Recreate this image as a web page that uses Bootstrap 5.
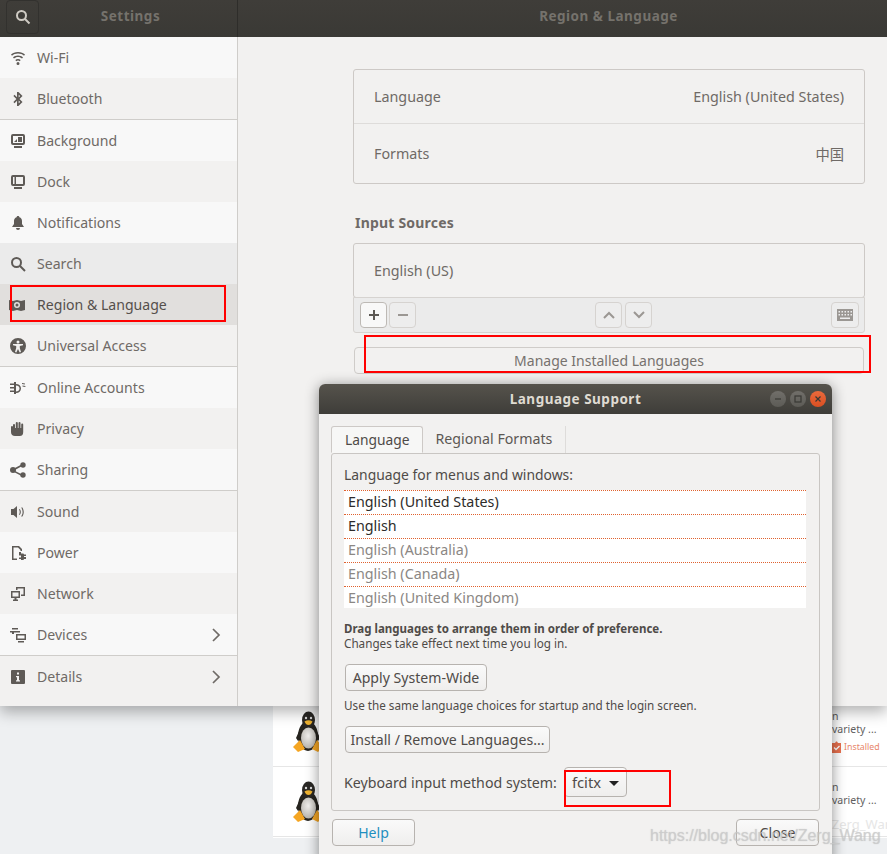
<!DOCTYPE html>
<html lang="en">
<head>
<meta charset="UTF-8">
<meta name="viewport" content="width=device-width, initial-scale=1.0">
<title>Region &amp; Language</title>
<link href="https://cdn.jsdelivr.net/npm/bootstrap@5.3.3/dist/css/bootstrap.min.css" rel="stylesheet">
<style>
html, body { height: 100%; }
body { position: relative; width: 887px; height: 854px; overflow: hidden; background: #eef0f2; font-family: "Noto Sans", "Open Sans", sans-serif; font-size: 14.3px; color: #6f6a66; }
.cjk { font-family: "Noto Sans CJK SC", sans-serif; }

/* app behind the settings window */
.back-app { position: absolute; left: 273px; top: 700px; width: 614px; height: 138px; background: #fff; overflow: hidden; }
.back-row { height: 67px; border-bottom: 1px solid #e6e6e6; padding: 11px 0 0 20px; }
.back-row + .back-row { height: 70px; padding-top: 14px; }
.back-text { position: absolute; font-size: 10.5px; color: #5f5f5f; line-height: 14px; white-space: nowrap; }
.back-installed { color: #e8866a; font-size: 8.8px; }
.back-wm { color: #e6e6e6; font-size: 13px; }

/* settings window */
.settings-win { position: absolute; left: 0; top: 0; width: 887px; height: 706px; background: #f2f1f0; box-shadow: 0 6px 14px rgba(0,0,0,.3); }
.win-header { height: 37px; background: linear-gradient(#3f3d39, #3a3935); }
.head-left { width: 238px; border-right: 1px solid #2e2d2a; }
.search-btn { width: 33px; height: 34px; margin-left: 6px; margin-top: -4px; border: 1px solid #32312e; border-radius: 4px; flex-shrink: 0; }
.head-title { font-weight: 700; font-size: 13.5px; letter-spacing: .5px; color: #75726c; padding-bottom: 4px; }
.left-title { padding-left: 13px; }
.right-title { padding-left: 92px; }
.side-panel { width: 238px; height: 669px; border-right: 1px solid #cfcdca; background: #f2f1f0; flex-shrink: 0; }
.side-list { --bs-list-group-bg: transparent; --bs-list-group-border-width: 0; border-radius: 0; }
.side-row { height: 41px; padding: 0 0 0 10px; display: flex; align-items: center; color: #6f6a66; background: #f8f8f8; font-size: 14.1px; }
.side-row.alt { background: #f2f1f0; }
.side-row.sep { height: 42px; border-bottom: 1px solid #cfcdca; }
.side-row.hover { background: #ebebeb; }
.side-row.active-row { background: #e1dfdd; color: #55504c; }
.side-ico { width: 16px; height: 16px; margin-right: 11px; flex: none; fill: #5e5a56; }
.side-arrow { margin-left: auto; margin-right: 16px; width: 10px; height: 16px; fill: none; stroke: #6f6a66; stroke-width: 1.7; }

.main-panel { padding: 32px 22px 0 115px; }
.frame-box { border: 1px solid #cdc9c6; border-radius: 3px; }
.lang-row { height: 53px; padding: 0 20px; }
.lang-row + .lang-row { height: 60px; border-top: 1px solid #dedcda; }
.input-title { font-weight: 700; font-size: 14px; letter-spacing: .2px; margin: 29px 0 11px 2px; line-height: 19px; }
.input-row { height: 55px; padding: 0 20px; }
.tool-row { height: 36px; margin-top: -1px; background: #ebebeb; border: 1px solid #d6d3d0; border-radius: 0 0 3px 3px; padding: 0 5px 0 6px; }
.tool-btn { width: 27px; height: 26px; padding: 0; border: 1px solid #d6d3d0; border-radius: 4px; background: #ededed; display: flex; align-items: center; justify-content: center; }
.tool-btn.on { background: #f8f8f8; border-color: #bdb9b5; }
.tool-btn.kbd-btn { width: 28px; }
.tool-btn svg { width: 14px; height: 14px; fill: none; stroke: #9b9793; stroke-width: 2; }
.tool-btn.on svg { stroke: #5d5955; }
.tool-gap { gap: 2px; }
.tool-gap.wide { gap: 3px; }
.manage-btn { display: block; width: 510px; height: 27px; margin: 14px 0 0 1px; padding: 0; border: 1px solid #cfccc9; border-radius: 4px; background: #f2f1f0; color: #77726e; font-size: 14px; }

/* language support dialog */
.lang-win { position: absolute; left: 319px; top: 384px; width: 513px; height: 480px; background: #f2f1f0; border-radius: 6px 6px 0 0; box-shadow: 0 2px 14px rgba(0,0,0,.45); color: #4f4b48; }
.dlg-header { height: 30px; background: linear-gradient(#56534c, #3e3d39); border-radius: 6px 6px 0 0; position: relative; }
.dlg-title { font-weight: 700; font-size: 13.5px; letter-spacing: .5px; color: #dfdbd2; }
.win-ctrls { position: absolute; right: 6px; top: 7px; gap: 4px; }
.win-dot { width: 16px; height: 16px; border-radius: 50%; background: linear-gradient(#716f6a, #5c5b56); display: flex; align-items: center; justify-content: center; }
.win-dot.close-dot { background: linear-gradient(#ec6a3c, #d94f22); }
.win-dot svg { width: 10px; height: 10px; fill: none; stroke: #3a3935; stroke-width: 1.2; }
.dlg-body { padding: 12px 12px 0; }
.dlg-tabs { --bs-nav-tabs-border-width: 1px; --bs-nav-tabs-border-color: #cdc9c6; border-bottom: 0; height: 27px; }
.dlg-tabs .nav-link { height: 27px; padding: 0 13px; line-height: 26px; font-size: 13.8px; color: #5c5854; border-radius: 3px 3px 0 0; }
.dlg-tabs .nav-link.active { background: #f7f7f6; color: #4f4b48; border-color: #cdc9c6; border-bottom-color: #f7f7f6; padding-right: 12px; }
.dlg-tabs .nav-link.plain { border: 0; border-right: 1px solid #dedcda; border-radius: 0; font-size: 14.2px; }
.tab-page { height: 358px; border: 1px solid #c9c6c3; border-radius: 3px; padding: 11px 13px 0 12px; }
.menu-label { line-height: 20px; font-size: 13.9px; margin-bottom: 5px; }
.order-list { --bs-list-group-bg: #fff; --bs-list-group-border-width: 0; border-radius: 0; background: #fff; }
.order-list .order-row { height: 24px; padding: 0 4px; line-height: 22px; border-top: 1px dotted #e0622f; font-size: 14.3px; color: #2e2c2a; background: #fff; }
.order-list .order-row.dim { color: #8b8784; }
.order-list .order-row:last-child { height: 22px; }
.hint-text { font-size: 11.7px; line-height: 15px; }
.hint-text.first { margin-top: 13px; font-size: 11.5px; }
.gtk-btn { height: 27px; padding: 0 5px; border: 1px solid #b7b3af; border-radius: 4px; background: linear-gradient(#fafafa, #efeeed); color: #4f4b48; font-size: 14.1px; line-height: 24px; white-space: nowrap; }
.apply-btn { display: block; margin: 13px 0 7px 1px; padding: 0; width: 142px; }
.install-btn { display: block; margin: 13px 0 14px 1px; padding: 0; width: 205px; }
.combo-line { gap: 7px; }
.combo-label { font-size: 14.2px; padding-top: 2px; }
.combo-btn { height: 30px; padding: 0 7px; font-size: 14.8px; }
.combo-arrow { width: 0; height: 0; margin-left: 8px; border-left: 5px solid transparent; border-right: 5px solid transparent; border-top: 5px solid #222; display: inline-block; vertical-align: 2px; }
.foot-row { margin-top: 8px; padding: 0 1px; }
.foot-btn { width: 83px; height: 27px; padding: 0; }
.help-txt { color: #1f8fc0; }

/* red marks drawn over the screenshot */
.red-mark { position: absolute; border: 2px solid #f00; pointer-events: none; }
.wm-text { position: absolute; left: 650px; top: 824px; font-family: "Liberation Sans", sans-serif; font-size: 16px; color: rgba(205,205,205,.75); text-shadow: 0 0 1px rgba(120,120,120,.35); white-space: nowrap; }
</style>
</head>
<body>

<svg width="0" height="0" class="position-absolute">
  <defs>
    <radialGradient id="bellyGrad" cx=".5" cy=".4" r=".6"><stop offset="0" stop-color="#f4f3f0"/><stop offset="1" stop-color="#b9b6b0"/></radialGradient>
    <symbol id="tux" viewBox="0 0 30 42">
      <ellipse cx="15" cy="25" rx="10" ry="15" fill="#26241f"/>
      <ellipse cx="15.500" cy="9" rx="6.500" ry="8.500" fill="#2a2825"/>
      <path d="M7 18l-4 9 2 3 4-6zM23 18l4 9-2 3-4-6z" fill="#26241f"/>
      <ellipse cx="15.500" cy="27" rx="7.500" ry="10.500" fill="url(#bellyGrad)"/>
      <path d="M11.500 10.500q4-2.500 8 0q-1.500 3.500-4 3.500t-4-3.500z" fill="#f2b632"/>
      <circle cx="13" cy="7" r="1.200" fill="#ddd"/><circle cx="18" cy="7" r="1.200" fill="#ddd"/>
      <path d="M0 36l7-7 5 9-7 3z" fill="#f5a623"/>
      <path d="M30 36l-6-7-5 9 6 3z" fill="#f5a623"/>
    </symbol>
  </defs>
</svg>

<!-- software list behind -->
<div class="back-app">
  <div class="back-row"><svg width="30" height="42"><use href="#tux"/></svg></div>
  <div class="back-row"><svg width="30" height="42"><use href="#tux"/></svg></div>
</div>
<div class="back-text" style="left:832px;top:709px">n</div>
<div class="back-text" style="left:832px;top:722px">variety ...</div>
<svg class="position-absolute" style="left:831px;top:741px" width="11" height="12" viewBox="0 0 11 12"><path d="M1 2h3l1-1.500h1L7 2h3v10H1z" fill="#e8704e"/><path d="M3 6.500l2 2 3.500-3.500" fill="none" stroke="#fff" stroke-width="1.300"/></svg>
<div class="back-text back-installed" style="left:844px;top:740px">Installed</div>
<div class="back-text" style="left:832px;top:780px">n</div>
<div class="back-text" style="left:832px;top:793px">variety ...</div>
<div class="back-text back-wm" style="left:827px;top:817px">/Zerg_Wang</div>

<!-- settings window -->
<div class="settings-win">
  <div class="win-header d-flex">
    <div class="head-left d-flex align-items-center">
      <div class="search-btn d-flex align-items-center justify-content-center">
        <svg width="16" height="16" viewBox="0 0 16 16" fill="none" stroke="#cfcbc4" stroke-width="2"><circle cx="6.5" cy="6.5" r="4.5"/><path d="M10 10l4.5 4.5"/></svg>
      </div>
      <div class="head-title left-title flex-grow-1 text-center pe-4 me-1">Settings</div>
    </div>
    <div class="head-title right-title flex-grow-1 text-center d-flex align-items-center justify-content-center">Region &amp; Language</div>
  </div>
  <div class="d-flex">
    <div class="side-panel">
      <div class="list-group side-list">
        <div class="list-group-item side-row"><svg class="side-ico" viewBox="0 0 16 16"><path d="M8 2C5 2 2.700 3 1 4.600l1 1.200C3.500 4.400 5.600 3.500 8 3.500s4.500.9 6 2.300l1-1.200C13.300 3 11 2 8 2zm0 3.500c-2 0-3.700.7-5 1.900l1 1.200c1-.9 2.400-1.600 4-1.600s3 .7 4 1.600l1-1.200c-1.300-1.200-3-1.900-5-1.900zM8 9c-1 0-2 .4-2.700 1l1 1.200c.4-.4 1-.7 1.700-.7s1.300.3 1.700.7l1-1.200C10 9.400 9 9 8 9zm0 3a1.500 1.500 0 100 3 1.500 1.500 0 000-3z"/></svg>Wi-Fi</div>
        <div class="list-group-item side-row alt sep"><svg class="side-ico" viewBox="0 0 16 16"><path d="M7 1v5.200L4.500 3.800 3.400 5l3 3-3 3 1.100 1.200L7 9.800V15h1.500L12.500 11 9.500 8l3-3-4-4zm1.700 2.700L10.200 5 8.700 6.500zm0 5.800L10.200 11l-1.500 1.300z"/></svg>Bluetooth</div>
        <div class="list-group-item side-row"><svg class="side-ico" viewBox="0 0 16 16"><path d="M3 1h10a2 2 0 012 2v7a2 2 0 01-2 2H3a2 2 0 01-2-2V3a2 2 0 012-2zm0 2v7h10V3zm1 6l3-3v3zm4-5h4v5H8zM4 13h8v2H4z"/></svg>Background</div>
        <div class="list-group-item side-row alt"><svg class="side-ico" viewBox="0 0 16 16"><path d="M3 1h10a2 2 0 012 2v7a2 2 0 01-2 2H3a2 2 0 01-2-2V3a2 2 0 012-2zm3 2v7h7V3zM3 3v7h1.500V3zM4 13h8v2H4z"/></svg>Dock</div>
        <div class="list-group-item side-row"><svg class="side-ico" viewBox="0 0 16 16"><path d="M8 1c-.8 0-1.300.5-1.400 1.200C4.800 2.800 4 4.300 4 6v3l-2 3h12l-2-3V6c0-1.700-.8-3.200-2.600-3.800C9.300 1.500 8.800 1 8 1zM6 13a2 2 0 004 0z"/></svg>Notifications</div>
        <div class="list-group-item side-row hover"><svg class="side-ico" viewBox="0 0 16 16" style="fill:none;stroke:#5e5a56;stroke-width:2"><circle cx="6.500" cy="6.500" r="4.500"/><path d="M10 10l5 5"/></svg>Search</div>
        <div class="list-group-item side-row active-row"><svg class="side-ico" viewBox="0 0 16 16" style="margin-left:-1px;margin-right:12px"><path d="M0 3l4 1 4-1 4 1 4-1v10l-4 1-4-1-4 1-4-1zm8 2a3 3 0 100 6 3 3 0 000-6zm0 1.500a1.500 1.500 0 110 3 1.500 1.500 0 010-3z" fill-rule="evenodd"/></svg>Region &amp; Language</div>
        <div class="list-group-item side-row alt sep"><svg class="side-ico" viewBox="0 0 16 16"><path fill-rule="evenodd" d="M8 0a8 8 0 110 16A8 8 0 018 0zm0 2.500a1.500 1.500 0 100 3 1.500 1.500 0 000-3zM3 6v1.300l3.200.7v2L5 14l1.300.4L8 11l1.700 3.400L11 14l-1.200-4V8l3.200-.7V6z"/></svg>Universal Access</div>
        <div class="list-group-item side-row"><svg class="side-ico" viewBox="0 0 16 16"><path d="M4 2h2v2c3 0 5 1.800 5 4.500S9 13 6 13v1H4v-2H0v-1.500h4v-2H0V7h4V5H0V3.500h4zm2 3.500v6c2 0 3.500-1.200 3.500-3S8 5.500 6 5.500zM12 3l3 .5-.2 1-2.800-.5zm.5 2.500l3 .5-.2 1-2.800-.5z"/></svg>Online Accounts</div>
        <div class="list-group-item side-row alt"><svg class="side-ico" viewBox="0 0 16 16"><path d="M3 4a1 1 0 012 0v3h.8V2a1 1 0 012 0v5h.7V2a1 1 0 012 0v5h.7V3.500a1 1 0 012 0V11c0 2.500-1 4-3.500 4H5c-2.500 0-4-1.500-4-4V6a1 1 0 012 0z"/></svg>Privacy</div>
        <div class="list-group-item side-row sep"><svg class="side-ico" viewBox="0 0 16 16"><circle cx="3" cy="8" r="3"/><circle cx="13" cy="3" r="2.700"/><circle cx="13" cy="13" r="2.700"/><path d="M3 7l9.500-5 .7 1.500L4 8.500l9.200 4.500-.7 1.500L3 9.500z"/></svg>Sharing</div>
        <div class="list-group-item side-row alt"><svg class="side-ico" viewBox="0 0 16 16"><path d="M1 5h2.500L7 2v12l-3.500-3H1zM9 5.500c1 1.300 1 3.700 0 5l.8.5c1.400-1.600 1.400-4.400 0-6zm2.200-1.800c1.900 2.300 1.900 6.300 0 8.600l.9.500c2.200-2.600 2.200-7 0-9.600z"/></svg>Sound</div>
        <div class="list-group-item side-row"><svg class="side-ico" viewBox="0 0 16 16"><path d="M2 1h7l3 3v2h-1.500V5L8 2.500H3.500v11H7V15H2zM9 7h2v1.500h1.500c1 0 1.500.5 1.500 1h2v1.500h-2v1h2V14h-2c0 .5-.5 1-1.500 1H11v-1H9v-1.500h2v-2H9z"/></svg>Power</div>
        <div class="list-group-item side-row alt"><svg class="side-ico" viewBox="0 0 16 16"><path d="M6 1h9v9h-4v-1.500h2.500v-6h-6V4H6zM1 5h9v7H6.500v1.500H8V15H3v-1.500h1.500V12H1zm1.500 1.500v4h6v-4z"/></svg>Network</div>
        <div class="list-group-item side-row sep"><svg class="side-ico" viewBox="0 0 16 16"><path d="M2 1h6v1.500H2zM0 4h10v1.500H4V7H2V5.500H0zM6 7h10v6H6zm1.500 1.500v3h7v-3zM8 14h6v1.500H8z"/></svg>Devices<svg class="side-arrow" viewBox="0 0 10 16"><path d="M2 2l6 6-6 6"/></svg></div>
        <div class="list-group-item side-row alt"><svg class="side-ico" viewBox="0 0 16 16"><path fill-rule="evenodd" d="M2 1h12a1 1 0 011 1v12a1 1 0 01-1 1H2a1 1 0 01-1-1V2a1 1 0 011-1zm5 2.500v2h2v-2zM6 7v1.300h1v3H6v1.200h4v-1.200H9V7z"/></svg>Details<svg class="side-arrow" viewBox="0 0 10 16"><path d="M2 2l6 6-6 6"/></svg></div>
      </div>
    </div>
    <div class="main-panel flex-grow-1">
      <div class="frame-box">
        <div class="lang-row d-flex align-items-center justify-content-between"><span>Language</span><span>English (United States)</span></div>
        <div class="lang-row d-flex align-items-center justify-content-between"><span>Formats</span><span class="cjk">中国</span></div>
      </div>
      <div class="input-title">Input Sources</div>
      <div class="frame-box input-row d-flex align-items-center">English (US)</div>
      <div class="tool-row d-flex align-items-center">
        <div class="d-flex tool-gap">
          <button class="tool-btn on" type="button"><svg viewBox="0 0 14 14"><path d="M7 2v10M2 7h10"/></svg></button>
          <button class="tool-btn" type="button"><svg viewBox="0 0 14 14"><path d="M2 7h10"/></svg></button>
        </div>
        <div class="d-flex tool-gap wide mx-auto">
          <button class="tool-btn" type="button"><svg viewBox="0 0 14 14"><path d="M2 10l5-5 5 5"/></svg></button>
          <button class="tool-btn" type="button"><svg viewBox="0 0 14 14"><path d="M2 4l5 5 5-5"/></svg></button>
        </div>
        <button class="tool-btn kbd-btn" type="button"><svg viewBox="0 0 16 12" style="width:16px;height:12px;stroke:none;fill:#9b9793"><path fill-rule="evenodd" d="M0 0h16v12H0zM1.500 2v1.500H3V2zm3 0v1.500H6V2zm3 0v1.500H9V2zm3 0v1.500H12V2zm3 0v1.500h1.500V2zM1.500 5v1.500H3V5zm3 0v1.500H6V5zm3 0v1.500H9V5zm3 0v1.500H12V5zm3 0v1.500h1.500V5zM3 8.500V10h10V8.500z"/></svg></button>
      </div>
      <button class="manage-btn" type="button">Manage Installed Languages</button>
    </div>
  </div>
</div>

<!-- language support dialog -->
<div class="lang-win">
  <div class="dlg-header d-flex align-items-center justify-content-center">
    <span class="dlg-title">Language Support</span>
    <div class="win-ctrls d-flex">
      <div class="win-dot"><svg viewBox="0 0 10 10"><path d="M2 5h6"/></svg></div>
      <div class="win-dot"><svg viewBox="0 0 10 10"><rect x="2" y="2" width="6" height="6"/></svg></div>
      <div class="win-dot close-dot"><svg viewBox="0 0 10 10"><path d="M2.500 2.500l5 5m0-5l-5 5"/></svg></div>
    </div>
  </div>
  <div class="dlg-body">
    <ul class="nav nav-tabs dlg-tabs">
      <li class="nav-item"><a class="nav-link active" href="#">Language</a></li>
      <li class="nav-item"><a class="nav-link plain" href="#">Regional Formats</a></li>
    </ul>
    <div class="tab-page">
      <div class="menu-label">Language for menus and windows:</div>
      <div class="list-group order-list">
        <div class="list-group-item order-row">English (United States)</div>
        <div class="list-group-item order-row">English</div>
        <div class="list-group-item order-row dim">English (Australia)</div>
        <div class="list-group-item order-row dim">English (Canada)</div>
        <div class="list-group-item order-row dim">English (United Kingdom)</div>
      </div>
      <div class="hint-text first"><b>Drag languages to arrange them in order of preference.</b></div>
      <div class="hint-text">Changes take effect next time you log in.</div>
      <button class="gtk-btn apply-btn" type="button">Apply System-Wide</button>
      <div class="hint-text">Use the same language choices for startup and the login screen.</div>
      <button class="gtk-btn install-btn" type="button">Install / Remove Languages...</button>
      <div class="d-flex align-items-center combo-line">
        <span class="combo-label">Keyboard input method system:</span>
        <button class="gtk-btn combo-btn" type="button">fcitx<span class="combo-arrow"></span></button>
      </div>
    </div>
    <div class="d-flex justify-content-between foot-row">
      <button class="gtk-btn foot-btn help-txt" type="button">Help</button>
      <button class="gtk-btn foot-btn" type="button">Close</button>
    </div>
  </div>
</div>

<!-- red annotations -->
<div class="red-mark" style="left:10px;top:285px;width:216px;height:37px"></div>
<div class="red-mark" style="left:364px;top:335px;width:507px;height:38px"></div>
<div class="red-mark" style="left:564px;top:770px;width:107px;height:37px"></div>
<div class="wm-text">https://blog.csdn.net/Zerg_Wang</div>

<script src="https://cdn.jsdelivr.net/npm/bootstrap@5.3.3/dist/js/bootstrap.bundle.min.js"></script>
</body>
</html>
